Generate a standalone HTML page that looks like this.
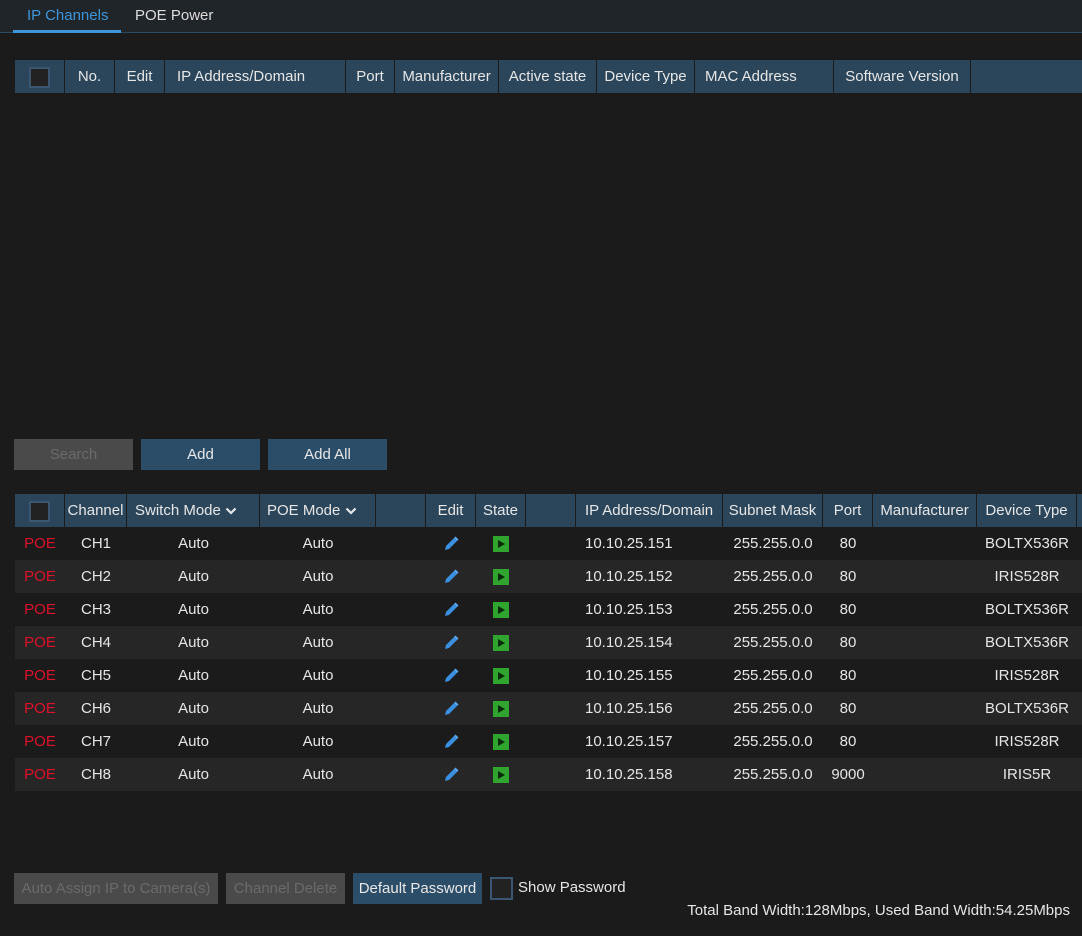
<!DOCTYPE html><html><head><style>
*{margin:0;padding:0;box-sizing:border-box}
body{width:1082px;height:936px;background:#1b1b1b;font-family:"Liberation Sans",sans-serif;font-size:15px;color:#e6e6e6;position:relative;overflow:hidden}
.a{position:absolute}
.top{left:0;top:0;width:1082px;height:33px;background:#20252a;border-bottom:1px solid #2c4a62}
.hd{position:absolute;height:33px;background:#2b465b;display:flex}
.hd div{border-right:1px solid #1b1b1b;height:33px;line-height:33px;white-space:nowrap;overflow:hidden}
.row{position:absolute;left:15px;width:1067px;height:33px;display:flex;line-height:33px}
.row div{white-space:nowrap;overflow:hidden}
.cb{width:21px;height:21px;border:2px solid #3a5670;background:#222;display:inline-block;vertical-align:middle}
.btn{position:absolute;height:31px;line-height:31px;text-align:center;background:#2c4d68;color:#e8e8e8}
.dis{background:#4a4a4a;color:#6a6a6a}
.pl{display:inline-block;width:16px;height:16px;background:#2fa52f;vertical-align:middle;position:relative}
.pl:after{content:"";position:absolute;left:5px;top:4px;border-left:7px solid #0b2a0b;border-top:4px solid transparent;border-bottom:4px solid transparent}
.ch{vertical-align:middle}
</style></head><body>
<div class="a top"></div>
<div class="a" style="left:27px;top:7px;color:#3d96dc">IP Channels</div>
<div class="a" style="left:13px;top:30px;width:108px;height:3px;background:#3d96dc"></div>
<div class="a" style="left:135px;top:7px;color:#ddd">POE Power</div>

<div class="hd" style="left:15px;top:60px;width:1067px">
<div style="width:50px;text-align:center"><span class="cb"></span></div>
<div style="width:50px;text-align:center">No.</div>
<div style="width:50px;text-align:center">Edit</div>
<div style="width:181px;padding-left:12px">IP Address/Domain</div>
<div style="width:49px;text-align:center">Port</div>
<div style="width:104px;text-align:center">Manufacturer</div>
<div style="width:98px;text-align:center">Active state</div>
<div style="width:98px;text-align:center">Device Type</div>
<div style="width:139px;padding-left:10px">MAC Address</div>
<div style="width:137px;text-align:center">Software Version</div>
<div style="flex:1;border:0"></div>
</div>

<div class="btn dis" style="left:14px;top:439px;width:119px">Search</div>
<div class="btn" style="left:141px;top:439px;width:119px">Add</div>
<div class="btn" style="left:268px;top:439px;width:119px">Add All</div>

<div class="hd" style="left:15px;top:494px;width:1067px">
<div style="width:50px;text-align:center"><span class="cb"></span></div>
<div style="width:62px;text-align:center">Channel</div>
<div style="width:133px;padding-left:8px">Switch Mode <svg class="ch" width="12" height="8" viewBox="0 0 12 8"><path d="M1.5 1.5 L6 6 L10.5 1.5" stroke="#e6e6e6" stroke-width="2.2" fill="none"/></svg></div>
<div style="width:116px;padding-left:7px">POE Mode <svg class="ch" width="12" height="8" viewBox="0 0 12 8"><path d="M1.5 1.5 L6 6 L10.5 1.5" stroke="#e6e6e6" stroke-width="2.2" fill="none"/></svg></div>
<div style="width:50px"></div>
<div style="width:50px;text-align:center">Edit</div>
<div style="width:50px;text-align:center">State</div>
<div style="width:50px"></div>
<div style="width:147px;padding-left:9px">IP Address/Domain</div>
<div style="width:100px;text-align:center">Subnet Mask</div>
<div style="width:50px;text-align:center">Port</div>
<div style="width:104px;text-align:center">Manufacturer</div>
<div style="width:100px;text-align:center">Device Type</div>
<div style="flex:1;border:0"></div>
</div>

<div id="rows"></div>
<script>
var d=[["151","80","BOLTX536R"],["152","80","IRIS528R"],["153","80","BOLTX536R"],["154","80","BOLTX536R"],["155","80","IRIS528R"],["156","80","BOLTX536R"],["157","80","IRIS528R"],["158","9000","IRIS5R"]];
var h="";
d.forEach(function(r,i){
h+='<div class="row" style="top:'+(527+i*33)+'px;background:'+(i%2?'#262626':'#1b1b1b')+'">'+
'<div style="width:50px;text-align:center;color:#e0102a">POE</div>'+
'<div style="width:62px;padding-left:16px">CH'+(i+1)+'</div>'+
'<div style="width:133px;text-align:center">Auto</div>'+
'<div style="width:116px;text-align:center">Auto</div>'+
'<div style="width:50px"></div>'+
'<div style="width:50px;text-align:center"><svg width="18" height="18" viewBox="0 0 18 18" style="vertical-align:middle"><path d="M3 15 L4 11 L12 3 L15 6 L7 14 Z" fill="#3a8fe0"/><path d="M12 3 L13.5 1.5 L16.5 4.5 L15 6Z" fill="#5aa8f0"/></svg></div>'+
'<div style="width:50px;text-align:center"><span class="pl"></span></div>'+
'<div style="width:50px"></div>'+
'<div style="width:147px;padding-left:9px">10.10.25.'+r[0]+'</div>'+
'<div style="width:100px;text-align:center">255.255.0.0</div>'+
'<div style="width:50px;text-align:center">'+r[1]+'</div>'+
'<div style="width:104px"></div>'+
'<div style="width:100px;text-align:center">'+r[2]+'</div></div>';});
document.getElementById("rows").innerHTML=h;
</script>

<div class="btn dis" style="left:14px;top:873px;width:204px">Auto Assign IP to Camera(s)</div>
<div class="btn dis" style="left:226px;top:873px;width:119px">Channel Delete</div>
<div class="btn" style="left:353px;top:873px;width:129px">Default Password</div>
<div class="a" style="left:490px;top:877px"><span class="cb" style="width:23px;height:23px"></span></div>
<div class="a" style="left:518px;top:879px">Show Password</div>
<div class="a" style="right:12px;top:902px">Total Band Width:128Mbps, Used Band Width:54.25Mbps</div>
</body></html>
